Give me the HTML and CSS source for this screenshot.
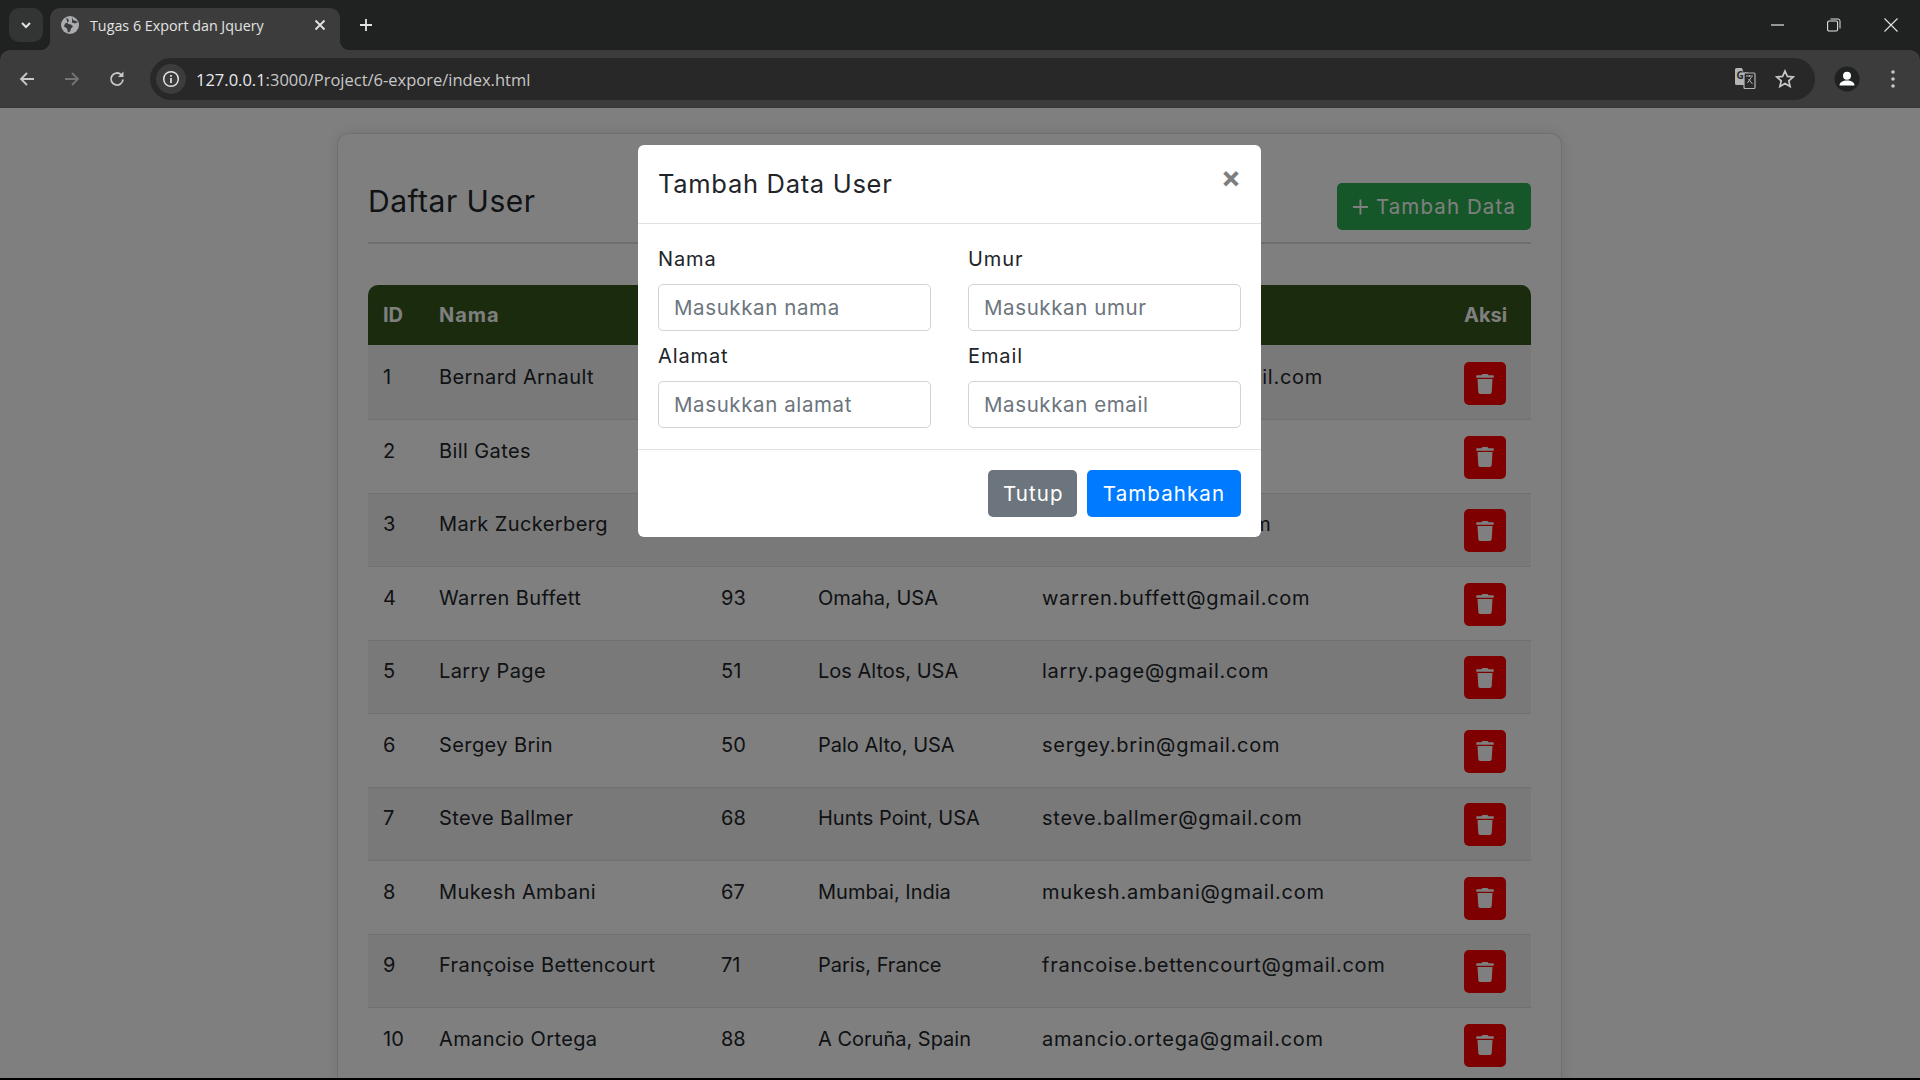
FILE: index.html
```html
<!DOCTYPE html>
<html lang="en">
<head>
    <meta charset="UTF-8">
    <meta name="viewport" content="width=device-width, initial-scale=1.0">
    <title>Tugas 6 Export dan Jquery</title>
    <link rel="stylesheet" href="styles.css">
</head>
<body>
    <svg class="defs" width="0" height="0">
        <symbol id="trash" viewBox="0 0 448 512">
            <path d="M432 32H312l-9.4-18.7A24 24 0 0 0 281.1 0H166.8a23.72 23.72 0 0 0-21.4 13.3L136 32H16A16 16 0 0 0 0 48v32a16 16 0 0 0 16 16h416a16 16 0 0 0 16-16V48a16 16 0 0 0-16-16zM53.2 467a48 48 0 0 0 47.9 45h245.8a48 48 0 0 0 47.9-45L416 128H32z"/>
        </symbol>
    </svg>

    <header class="browser">
        <div class="tabstrip">
            <div class="tab-search">
                <svg width="14" height="14" viewBox="0 0 14 14"><path d="M3 5l4 4 4-4" fill="none" stroke="#e3e3e3" stroke-width="2"/></svg>
            </div>
            <div class="tab">
                <svg class="favicon" width="20" height="20" viewBox="0 0 20 20">
                    <circle cx="10" cy="10" r="9" fill="#a9adb1"/>
                    <path d="M6 2.5l3 2.5-1 2.5-3 1-1 3 3 2 1 4 2-1 1-3 2-2-2-2-3-.5M12 2l1 3 3 1 2 1-3 1.5-3-1z" fill="#3b3b3b"/>
                </svg>
                <span class="tab-title">Tugas 6 Export dan Jquery</span>
                <svg class="tab-close" width="12" height="12" viewBox="0 0 12 12"><path d="M1.5 1.5l9 9M10.5 1.5l-9 9" stroke="#e3e3e3" stroke-width="1.8"/></svg>
            </div>
            <svg class="new-tab" width="14" height="14" viewBox="0 0 14 14"><path d="M7 1v12M1 7h12" stroke="#e3e3e3" stroke-width="1.8"/></svg>
            <div class="window-controls">
                <svg width="14" height="14" viewBox="0 0 14 14"><path d="M1 7h13" stroke="#e3e3e3" stroke-width="1.2"/></svg>
                <svg width="14" height="14" viewBox="0 0 14 14"><rect x="0.6" y="3" width="10" height="10" rx="1.5" fill="none" stroke="#e3e3e3" stroke-width="1.1"/><path d="M3.5 1h7.5a2 2 0 0 1 2 2v7.5" fill="none" stroke="#e3e3e3" stroke-width="1"/></svg>
                <svg width="14" height="14" viewBox="0 0 14 14"><path d="M.5.5l13 13M13.5.5l-13 13" stroke="#e3e3e3" stroke-width="1.1"/></svg>
            </div>
        </div>
        <div class="toolbar">
            <svg class="nav-icon" width="18" height="18" viewBox="0 0 18 18"><path d="M16 9H3M9 3L3 9l6 6" fill="none" stroke="#c7c7c7" stroke-width="1.8"/></svg>
            <svg class="nav-icon" width="18" height="18" viewBox="0 0 18 18"><path d="M2 9h13M9 3l6 6-6 6" fill="none" stroke="#747474" stroke-width="1.8"/></svg>
            <svg class="nav-icon" width="18" height="18" viewBox="0 0 18 18"><path d="M15 9.500A6 6 0 1 1 13.200 4.700" fill="none" stroke="#c7c7c7" stroke-width="1.800"/><path d="M15.500 1.500v5.500H10z" fill="#c7c7c7"/></svg>
            <div class="omnibox">
                <span class="site-info">
                    <svg width="18" height="18" viewBox="0 0 18 18"><circle cx="9" cy="9" r="7.300" fill="none" stroke="#e3e3e3" stroke-width="1.500"/><path d="M9 8v5M9 5v1.800" stroke="#e3e3e3" stroke-width="1.700"/></svg>
                </span>
                <span class="url"><span class="url-host">127.0.0.1</span>:3000/Project/6-expore/index.html</span>
                <svg class="translate" width="22" height="22" viewBox="0 0 22 22">
                    <path d="M1 1.500A1.500 1.500 0 0 1 2.500 0H8l1.500 4.500H14V17H2.500A1.500 1.500 0 0 1 1 15.500z" fill="#b4b4b4"/>
                    <rect x="10" y="5" width="11" height="15.500" rx="1" fill="#282828" stroke="#b4b4b4" stroke-width="1.200"/>
                    <text class="translate-g" x="2.500" y="11">G</text>
                    <path d="M12 8h7M15.500 7v1.500M13.500 15l4-6M14.500 11l4 5" fill="none" stroke="#b4b4b4"/>
                </svg>
                <svg class="star" width="20" height="20" viewBox="0 0 20 20"><path d="M10 2l2.400 5.400 5.800.6-4.400 3.900 1.300 5.700-5.100-3-5.100 3 1.300-5.700L1.800 8l5.800-.6z" fill="none" stroke="#c7c7c7" stroke-width="1.700"/></svg>
            </div>
            <span class="avatar">
                <svg width="26" height="26" viewBox="0 0 26 26"><circle cx="13" cy="13" r="12.500" fill="#202222"/><circle cx="13" cy="9.800" r="4" fill="#fff"/><path d="M5.500 19.500c0-3.500 3.500-5 7.500-5s7.500 1.500 7.500 5z" fill="#fff"/></svg>
            </span>
            <svg class="kebab" width="6" height="20" viewBox="0 0 6 20"><circle cx="3" cy="3" r="1.800" fill="#c7c7c7"/><circle cx="3" cy="10" r="1.800" fill="#c7c7c7"/><circle cx="3" cy="17" r="1.800" fill="#c7c7c7"/></svg>
        </div>
    </header>

    <main class="viewport">
        <section class="card">
            <div class="card-head">
                <h3 class="card-title">Daftar User</h3>
                <button class="btn btn-add">
                    <svg width="18" height="18" viewBox="0 0 18 18"><path d="M9 1v16M1 9h16" stroke="#fff" stroke-width="2"/></svg>
                    Tambah Data
                </button>
            </div>
            <hr class="divider">
            <table class="users">
                <thead>
                    <tr>
                        <th class="col-id">ID</th>
                        <th class="col-name">Nama</th>
                        <th class="col-age">Umur</th>
                        <th class="col-address">Alamat</th>
                        <th class="col-email">Email</th>
                        <th class="col-action">Aksi</th>
                    </tr>
                </thead>
                <tbody>
                    <tr><td>1</td><td>Bernard Arnault</td><td>75</td><td>Paris, France</td><td>bernard.arnault@gmail.com</td><td><button class="btn-delete"><svg><use href="#trash"/></svg></button></td></tr>
                    <tr><td>2</td><td>Bill Gates</td><td>68</td><td>Medina, USA</td><td>bill.gates@gmail.com</td><td><button class="btn-delete"><svg><use href="#trash"/></svg></button></td></tr>
                    <tr><td>3</td><td>Mark Zuckerberg</td><td>39</td><td>Palo Alto, USA</td><td>mark.zuck@gmail.com</td><td><button class="btn-delete"><svg><use href="#trash"/></svg></button></td></tr>
                    <tr><td>4</td><td>Warren Buffett</td><td>93</td><td>Omaha, USA</td><td>warren.buffett@gmail.com</td><td><button class="btn-delete"><svg><use href="#trash"/></svg></button></td></tr>
                    <tr><td>5</td><td>Larry Page</td><td>51</td><td>Los Altos, USA</td><td>larry.page@gmail.com</td><td><button class="btn-delete"><svg><use href="#trash"/></svg></button></td></tr>
                    <tr><td>6</td><td>Sergey Brin</td><td>50</td><td>Palo Alto, USA</td><td>sergey.brin@gmail.com</td><td><button class="btn-delete"><svg><use href="#trash"/></svg></button></td></tr>
                    <tr><td>7</td><td>Steve Ballmer</td><td>68</td><td>Hunts Point, USA</td><td>steve.ballmer@gmail.com</td><td><button class="btn-delete"><svg><use href="#trash"/></svg></button></td></tr>
                    <tr><td>8</td><td>Mukesh Ambani</td><td>67</td><td>Mumbai, India</td><td>mukesh.ambani@gmail.com</td><td><button class="btn-delete"><svg><use href="#trash"/></svg></button></td></tr>
                    <tr><td>9</td><td>Françoise Bettencourt</td><td>71</td><td>Paris, France</td><td>francoise.bettencourt@gmail.com</td><td><button class="btn-delete"><svg><use href="#trash"/></svg></button></td></tr>
                    <tr><td>10</td><td>Amancio Ortega</td><td>88</td><td>A Coruña, Spain</td><td>amancio.ortega@gmail.com</td><td><button class="btn-delete"><svg><use href="#trash"/></svg></button></td></tr>
                </tbody>
            </table>
        </section>

        <div class="backdrop"></div>

        <div class="modal">
            <div class="modal-head">
                <h5 class="modal-title">Tambah Data User</h5>
                <span class="modal-close">×</span>
            </div>
            <div class="modal-body">
                <div class="field">
                    <label>Nama</label>
                    <input type="text" placeholder="Masukkan nama">
                </div>
                <div class="field">
                    <label>Umur</label>
                    <input type="text" placeholder="Masukkan umur">
                </div>
                <div class="field">
                    <label>Alamat</label>
                    <input type="text" placeholder="Masukkan alamat">
                </div>
                <div class="field">
                    <label>Email</label>
                    <input type="text" placeholder="Masukkan email">
                </div>
            </div>
            <div class="modal-foot">
                <button class="btn btn-close">Tutup</button>
                <button class="btn btn-save">Tambahkan</button>
            </div>
        </div>
    </main>
</body>
</html>
```

FILE: styles.css
```css
* {
    box-sizing: border-box;
}

body {
    margin: 0;
    height: 1080px;
    overflow: hidden;
    background-color: #000;
    font-family: Inter, "Liberation Sans", sans-serif;
    color: #212529;
}

.defs {
    position: absolute;
}

/* browser chrome */
.browser {
    height: 108px;
    background-color: #202222;
    font-family: "Open Sans", "Liberation Sans", sans-serif;
}

.tabstrip {
    display: flex;
    align-items: flex-start;
    height: 50px;
}

.tab-search {
    display: flex;
    align-items: center;
    justify-content: center;
    width: 34px;
    height: 34px;
    margin: 8px 0 0 9px;
    border-radius: 10px;
    background-color: #333535;
}

.tab {
    position: relative;
    display: flex;
    align-items: center;
    width: 290px;
    height: 42px;
    margin: 8px 0 0 7px;
    padding: 0 0 8px 10px;
    border-radius: 10px 10px 0 0;
    background-color: #3c3c3c;
}

.tab::before,
.tab::after {
    content: "";
    position: absolute;
    bottom: 0;
    width: 10px;
    height: 10px;
}

.tab::before {
    left: -10px;
    background: radial-gradient(circle at 0 0, transparent 10px, #3c3c3c 10.5px);
}

.tab::after {
    right: -10px;
    background: radial-gradient(circle at 100% 0, transparent 10px, #3c3c3c 10.5px);
}

.tab-title {
    margin-left: 10px;
    font-size: 14.3px;
    color: #e3e3e3;
}

.tab-close {
    margin-left: auto;
    margin-right: 14px;
}

.new-tab {
    margin: 18px 0 0 19px;
}

.window-controls {
    display: flex;
    gap: 43px;
    margin: 18px 22px 0 auto;
}

.toolbar {
    display: flex;
    align-items: center;
    height: 58px;
    padding: 1px 0 0 18px;
    border-radius: 10px 10px 0 0;
    background-color: #3c3c3c;
    border-bottom: 1px solid #383838;
}

.nav-icon {
    flex: none;
    margin-right: 27px;
}

.omnibox {
    display: flex;
    align-items: center;
    width: 1665px;
    height: 42px;
    margin-left: -3px;
    padding-left: 6px;
    border-radius: 21px;
    background-color: #282828;
}

.site-info {
    display: flex;
    align-items: center;
    justify-content: center;
    width: 30px;
    height: 30px;
    border-radius: 50%;
    background-color: #3c3c3c;
}

.url {
    margin-left: 10px;
    font-size: 16.5px;
    color: #c7c7c7;
}

.url-host {
    color: #e8eaed;
}

.translate {
    margin-left: auto;
}

.translate-g {
    font-size: 10px;
    font-weight: 700;
    fill: #282828;
}

.star {
    margin: 0 20px 0 19px;
}

.avatar {
    display: flex;
    margin-left: 19px;
}

.kebab {
    margin-left: 30px;
}

/* page */
.viewport {
    position: relative;
    height: 970px;
    overflow: hidden;
    background-color: #fff;
}

.card {
    width: 1225px;
    margin: 25px 0 0 337px;
    padding: 49px 30px 30px;
    border: 1px solid rgba(0, 0, 0, .125);
    border-radius: 12px;
    background-color: #fff;
    box-shadow: 0 0 15px rgba(0, 0, 0, .1);
}

.card-head {
    display: flex;
    align-items: center;
    justify-content: space-between;
}

.card-title {
    margin: -12px 0 0;
    font-size: 30px;
    font-weight: 400;
    letter-spacing: .5px;
}

.btn {
    height: 47px;
    padding: 0 15px;
    border: 0;
    border-radius: 5px;
    font-family: inherit;
    font-size: 20.5px;
    letter-spacing: 1.1px;
    color: #fff;
}

.btn-add {
    display: flex;
    align-items: center;
    gap: 7px;
    width: 194px;
    white-space: nowrap;
    background-color: #2bae50;
}

.divider {
    margin: 12px 0 41px;
    border: 0;
    border-top: 2px solid #dcdcdc;
}

.users {
    width: 1163px;
    table-layout: fixed;
    border-collapse: separate;
    border-spacing: 0;
    font-size: 20px;
}

.users th {
    height: 60px;
    padding: 0 15px;
    background-color: #34561c;
    color: #fff;
    font-weight: 700;
    text-align: left;
}

.users th:first-child {
    border-top-left-radius: 10px;
}

.users th:last-child {
    border-top-right-radius: 10px;
}

.col-id { width: 56px; }
.col-name { width: 282px; letter-spacing: 1px; }
.col-age { width: 97px; }
.col-address { width: 224px; }
.col-email { width: 422px; }
.col-action { width: 82px; }

.users td {
    height: 73.5px;
    padding: 15.5px 15px 14px;
    border-bottom: 1px solid #dee2e6;
    vertical-align: top;
    line-height: 30px;
}

.users tbody tr:first-child td {
    height: 75px;
    padding-top: 17px;
}

.users td:nth-child(2) {
    letter-spacing: .4px;
}

.users td:nth-child(5) {
    letter-spacing: .75px;
}

.users tbody tr:nth-child(odd) td {
    background-color: rgba(0, 0, 0, .05);
}

.btn-delete {
    display: flex;
    align-items: center;
    justify-content: center;
    width: 42px;
    height: 43px;
    border: 0;
    border-radius: 5px;
    background-color: #ff0000;
}

.btn-delete svg {
    width: 18px;
    height: 20px;
    fill: #fff;
}

.backdrop {
    position: absolute;
    inset: 0;
    background-color: rgba(0, 0, 0, .5);
}

/* modal */
.modal {
    position: absolute;
    left: 638px;
    top: 37px;
    width: 623px;
    height: 392px;
    border-radius: 6px;
    background-color: #fff;
}

.modal-head {
    display: flex;
    align-items: flex-start;
    justify-content: space-between;
    height: 79px;
    padding: 20px;
    border-bottom: 1px solid #dee2e6;
}

.modal-title {
    margin: 0;
    font-size: 25.5px;
    font-weight: 400;
    line-height: 37px;
    letter-spacing: .7px;
}

.modal-close {
    margin: -6px 0 0;
    font-size: 30px;
    font-weight: 700;
    line-height: 36px;
    color: #000;
    opacity: .5;
}

.modal-body {
    display: grid;
    grid-template-columns: 273px 273px;
    align-content: start;
    column-gap: 37px;
    row-gap: 10px;
    height: 226px;
    padding: 20px 20px 0;
    border-bottom: 1px solid #dee2e6;
}

.field label {
    display: block;
    height: 40px;
    font-size: 20px;
    line-height: 30px;
    letter-spacing: .9px;
}

.field input {
    display: block;
    width: 100%;
    height: 47px;
    padding: 0 15px;
    border: 1px solid #ced4da;
    border-radius: 5px;
    font-family: inherit;
    font-size: 20.5px;
    letter-spacing: .6px;
}

.field input::placeholder {
    color: #6c757d;
}

.modal-foot {
    display: flex;
    justify-content: flex-end;
    gap: 10px;
    padding: 20px;
}

.btn-close {
    width: 89px;
    background-color: #6c757d;
}

.btn-save {
    width: 154px;
    background-color: #007bff;
}
```
